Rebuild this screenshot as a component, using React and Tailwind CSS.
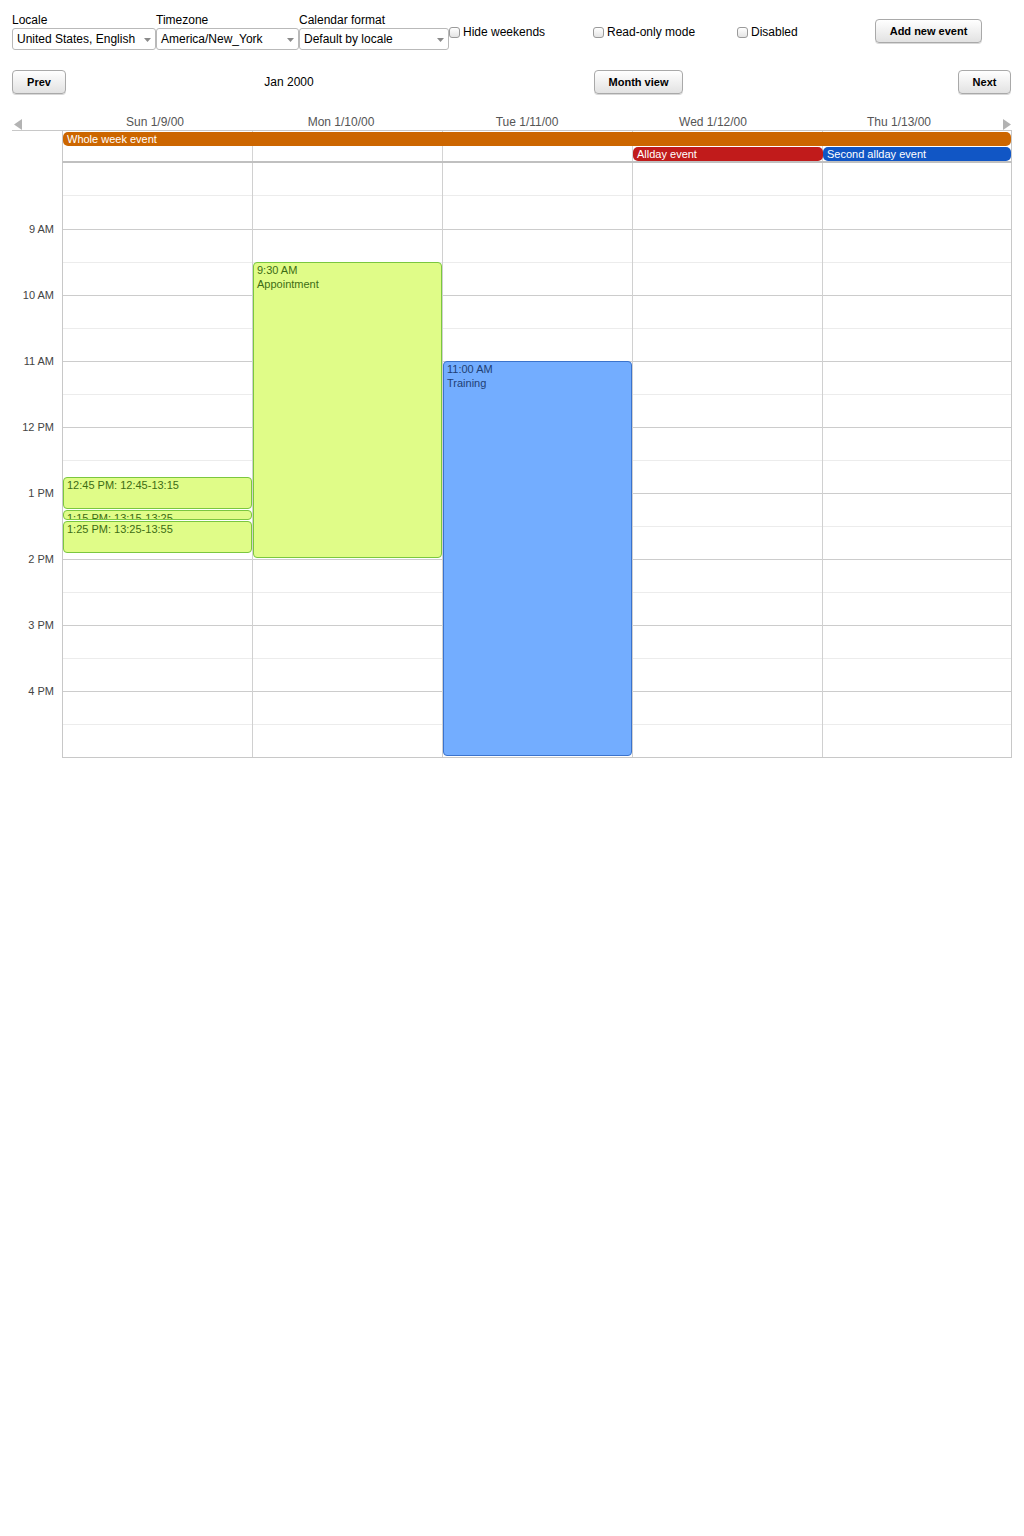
import React from 'react';

const hours = ['', '9 AM', '10 AM', '11 AM', '12 PM', '1 PM', '2 PM', '3 PM', '4 PM'];
const days = ['Sun 1/9/00', 'Mon 1/10/00', 'Tue 1/11/00', 'Wed 1/12/00', 'Thu 1/13/00'];
const HOUR = 66;

// events per day column: start/end in hours from 8:00
const events = {
  0: [
    { start: 4.75, end: 5.25, label: '12:45 PM: 12:45-13:15' },
    { start: 5.25, end: 5.4167, label: '1:15 PM: 13:15-13:25' },
    { start: 5.4167, end: 5.9167, label: '1:25 PM: 13:25-13:55' },
  ],
  1: [{ start: 1.5, end: 6, label: '9:30 AM', title: 'Appointment' }],
  2: [{ start: 3, end: 9, label: '11:00 AM', title: 'Training', blue: true }],
};

const Select = ({ label, value, className }) => (
  <div className={`flex flex-col ${className}`}>
    <span className="text-xs leading-[15px] text-black">{label}</span>
    <div className="relative h-[22px] border border-[#b9b9b9] rounded-[3px] bg-white flex items-center pl-1 text-xs text-black">
      {value}
      <svg className="absolute right-[4px] top-[9px]" width="7" height="4" viewBox="0 0 7 4">
        <path d="M0 0h7L3.5 4z" fill="#8a8a8a" />
      </svg>
    </div>
  </div>
);

const Check = ({ label, className }) => (
  <label className={`flex items-center gap-[3px] text-xs text-black ${className}`}>
    <span className="w-[11px] h-[11px] rounded-[3px] border border-[#9a9a9a] bg-gradient-to-b from-white to-[#e4e4e4]" />
    {label}
  </label>
);

const Btn = ({ children, className }) => (
  <button className={`h-[24px] rounded-[4px] border border-[#a9a9a9] bg-gradient-to-b from-white to-[#e2e2e2] text-[11px] font-bold text-black shadow-[0_1px_0_#d8d8d8] ${className}`}>
    {children}
  </button>
);

const Event = ({ ev }) => {
  const top = ev.start * HOUR;
  const height = (ev.end - ev.start) * HOUR - 1;
  const color = ev.blue
    ? 'bg-[#73adff] border-[#3b73cc] text-[#1f3f75]'
    : 'bg-[#e0fc88] border-[#7bc73f] text-[#3d6c14]';
  return (
    <div
      className={`absolute left-0 right-0 rounded-[4px] border overflow-hidden px-[3px] text-[11px] leading-[14px] ${color}`}
      style={{ top, height }}
    >
      <div>{ev.label}</div>
      {ev.title && <div>{ev.title}</div>}
    </div>
  );
};

const colWidths = 'grid-cols-[190px_190px_190px_190px_188px]';

export default function App() {
  return (
    <div className="w-[1024px] min-h-[1536px] bg-white font-['Liberation_Sans',Arial,sans-serif]">
      {/* toolbar */}
      <div className="flex items-start pl-3 pt-[13px]">
        <Select label="Locale" value="United States, English" className="w-[144px]" />
        <Select label="Timezone" value="America/New_York" className="w-[143px]" />
        <Select label="Calendar format" value="Default by locale" className="w-[150px]" />
        <Check label="Hide weekends" className="mt-[11px] w-[144px]" />
        <Check label="Read-only mode" className="mt-[11px] w-[144px]" />
        <Check label="Disabled" className="mt-[11px] w-[138px]" />
        <Btn className="mt-[6px] w-[107px]">Add new event</Btn>
      </div>

      <div className="flex items-center pl-3 pr-[13px] mt-[20px]">
        <Btn className="w-[54px]">Prev</Btn>
        <div className="w-[446px] text-center text-xs text-black">Jan 2000</div>
        <Btn className="ml-[82px] w-[89px]">Month view</Btn>
        <div className="flex-1" />
        <Btn className="w-[53px]">Next</Btn>
      </div>

      {/* calendar */}
      <div className="ml-3 w-[1000px] mt-[17px]">
        <div className="relative grid grid-cols-[50px_repeat(5,186px)] h-[20px] border-b border-[#c8c8c8]">
          <svg className="absolute left-[2px] top-[8px]" width="8" height="11" viewBox="0 0 8 11">
            <path d="M8 0v11L0 5.5z" fill="#b3b3b3" />
          </svg>
          <svg className="absolute right-[1px] top-[8px]" width="8" height="11" viewBox="0 0 8 11">
            <path d="M0 0v11l8-5.5z" fill="#b3b3b3" />
          </svg>
          <div />
          {days.map((d) => (
            <div key={d} className="text-center text-xs leading-[20px] pt-[1px] text-[#555]">{d}</div>
          ))}
        </div>

        {/* all-day */}
        <div className="grid grid-cols-[50px_1fr]">
          <div />
          <div className="relative border-l border-r border-[#c8c8c8] border-b-2 border-b-[#c0c0c0]">
            <div className={`grid ${colWidths} h-[30px]`}>
              {days.map((d, i) => (
                <div key={d} className={i < 4 ? 'border-r border-[#d4d4d4]' : ''} />
              ))}
            </div>
            <div className="absolute left-0 right-0 top-[1px] h-[14px] rounded-[5px] bg-[#cc6600] pl-[4px] text-[11px] leading-[14px] text-white">
              Whole week event
            </div>
            <div className={`absolute left-0 right-0 top-[16px] grid ${colWidths}`}>
              <div className="col-start-4 h-[14px] rounded-[5px] bg-[#c11b1b] pl-[4px] text-[11px] leading-[14px] text-white">Allday event</div>
              <div className="h-[14px] rounded-[5px] bg-[#1156c5] pl-[4px] text-[11px] leading-[14px] text-white">Second allday event</div>
            </div>
          </div>
        </div>

        {/* time grid */}
        <div className="grid grid-cols-[50px_1fr]">
          <div className="relative">
            {hours.map((h, i) => (
              <div key={i} className="h-[66px] relative">
                {h && (
                  <span className="absolute right-[8px] top-[-7px] text-[11px] leading-[14px] text-[#444]">{h}</span>
                )}
              </div>
            ))}
          </div>
          <div className="relative border-l border-r border-b border-[#c8c8c8]">
            {hours.map((h, i) => (
              <div key={i} className={`h-[66px] ${i > 0 ? 'border-t border-[#cccccc]' : ''}`}>
                <div className="h-[33px] border-b border-[#ececec]" />
              </div>
            ))}
            <div className={`absolute inset-0 grid ${colWidths}`}>
              {days.map((d, i) => (
                <div key={d} className={`relative ${i < 4 ? 'border-r border-[#d0d0d0]' : ''}`}>
                  {(events[i] || []).map((ev, j) => (
                    <Event key={j} ev={ev} />
                  ))}
                </div>
              ))}
            </div>
          </div>
        </div>
      </div>
    </div>
  );
}
